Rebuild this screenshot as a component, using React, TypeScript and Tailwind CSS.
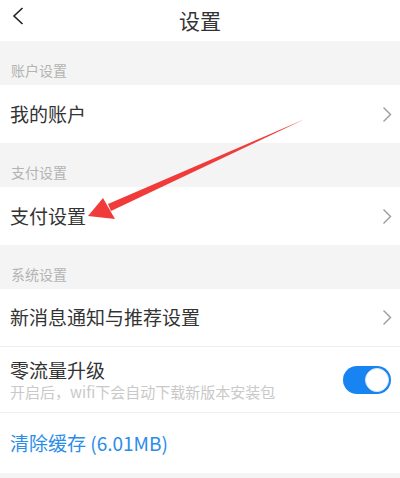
import React from 'react';

const font = { fontFamily: '"Noto Sans CJK SC", "Noto Sans", sans-serif' };

const Chevron = () => (
  <svg width="10" height="17" viewBox="0 0 10 17" className="shrink-0">
    <path d="M1.5 1.5 L8.5 8.5 L1.5 15.5" fill="none" stroke="#9a9a9a" strokeWidth="1.4" />
  </svg>
);

const SectionLabel = ({ text }: { text: string }) => (
  <div className="flex h-[44px] items-end bg-[#f4f4f4] px-[11px] pb-[8px] text-[14px] leading-none text-[#b3b3b3]">
    {text}
  </div>
);

const LinkRow = ({ text, border }: { text: string; border?: boolean }) => (
  <div
    className={`flex h-[58px] items-center justify-between bg-white pl-[10px] pr-[8px] text-[19px] text-[#333] ${
      border ? 'border-b border-[#eeeeee]' : ''
    }`}
  >
    <span>{text}</span>
    <Chevron />
  </div>
);

const App = () => {
  return (
    <div className="relative h-[478px] w-[400px] overflow-hidden bg-[#f4f4f4]" style={font}>
      <div className="relative flex h-[41px] items-center justify-center bg-white">
        <svg width="14" height="18" viewBox="0 0 14 18" className="absolute left-[11px] top-[7px]">
          <path d="M11.5 1 L3 9 L11.5 17" fill="none" stroke="#222" strokeWidth="1.6" />
        </svg>
        <span className="text-[21px] leading-none text-[#333]">设置</span>
      </div>

      <SectionLabel text="账户设置" />
      <LinkRow text="我的账户" />

      <SectionLabel text="支付设置" />
      <LinkRow text="支付设置" />

      <SectionLabel text="系统设置" />
      <LinkRow text="新消息通知与推荐设置" border />

      <div className="flex h-[66px] items-center justify-between border-b border-[#eeeeee] bg-white pl-[10px] pr-[9px]">
        <div className="flex flex-col">
          <span className="text-[19px] leading-[24px] text-[#333]">零流量升级</span>
          <span className="text-[15px] leading-[20px] text-[#c9c9c9]">开启后，wifi下会自动下载新版本安装包</span>
        </div>
        <div className="flex h-[28px] w-[48px] items-center justify-end rounded-full bg-[#1884f2] p-[2px]">
          <div className="h-[24px] w-[24px] rounded-full border border-[#d8e6f5] bg-white" />
        </div>
      </div>

      <div className="flex h-[60px] items-center bg-white pl-[10px] text-[19px] text-[#2a8de8]">
        清除缓存 (6.01MB)
      </div>

      <svg
        width="400"
        height="478"
        viewBox="0 0 400 478"
        className="pointer-events-none absolute left-0 top-0"
      >
        <polygon points="305,119 108,204 111,211" fill="#f13b3b" />
        <polygon points="88,216 103,198 115,219" fill="#f13b3b" />
      </svg>
    </div>
  );
};

export default App;
